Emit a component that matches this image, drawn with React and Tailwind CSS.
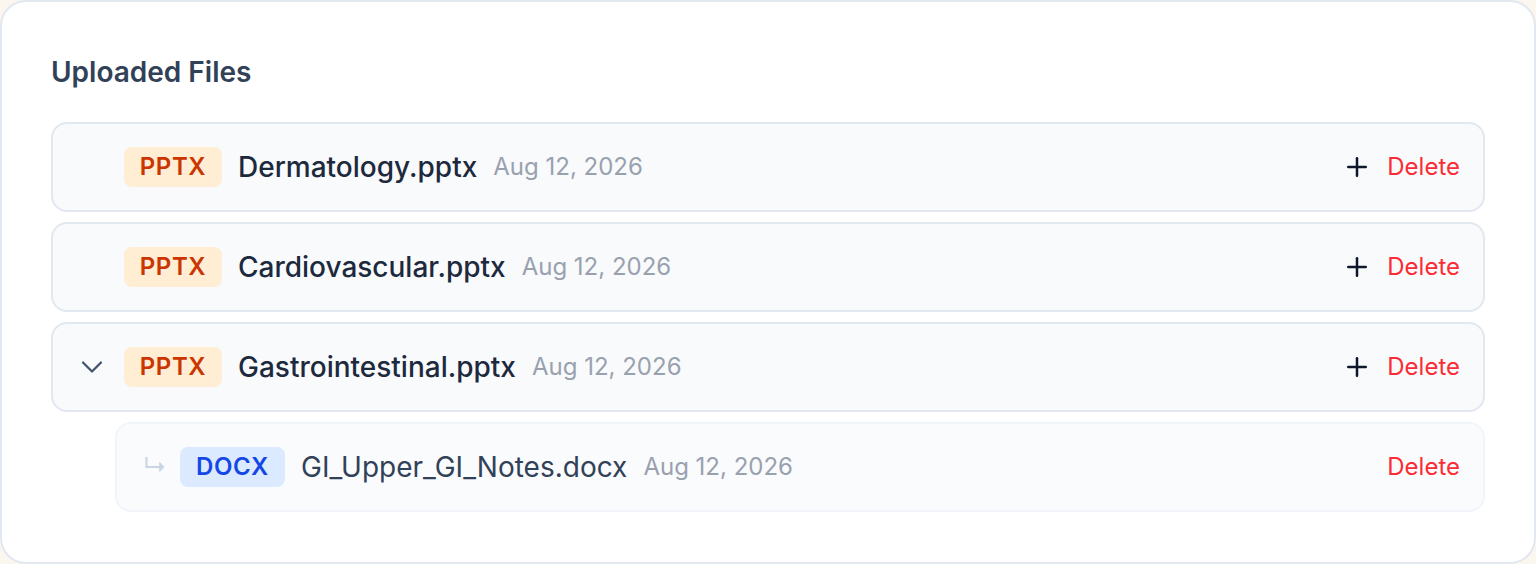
import React from 'react';
import { Plus } from 'lucide-react';

const files = [
  { id: 1, type: 'PPTX', name: 'Dermatology.pptx', date: 'Aug 12, 2026' },
  { id: 2, type: 'PPTX', name: 'Cardiovascular.pptx', date: 'Aug 12, 2026' },
  {
    id: 3,
    type: 'PPTX',
    name: 'Gastrointestinal.pptx',
    date: 'Aug 12, 2026',
    expanded: true,
    children: [{ id: 4, type: 'DOCX', name: 'GI_Upper_GI_Notes.docx', date: 'Aug 12, 2026' }],
  },
];

const badgeStyles = {
  PPTX: 'bg-orange-100 text-orange-700 w-[98px]',
  DOCX: 'bg-blue-100 text-blue-700 w-[105px]',
};

const TypeBadge = ({ type }) => (
  <span
    className={`h-10 flex items-center justify-center rounded-lg text-[24px] font-semibold tracking-wide ${badgeStyles[type]}`}
  >
    {type}
  </span>
);

const Chevron = () => (
  <svg width="22" height="14" viewBox="0 0 22 14" fill="none" stroke="currentColor" strokeWidth="2.3" strokeLinecap="round" strokeLinejoin="round">
    <polyline points="2,2.5 11,11.5 20,2.5" />
  </svg>
);

const App = () => {
  return (
    <div className="min-h-screen bg-[#fbf7ee]" style={{ fontFamily: 'Inter, "Noto Sans", sans-serif' }}>
      <div className="h-[564px] bg-white border-2 border-slate-200 rounded-[26px] px-[49px] pt-[50px]">
        <h2 className="text-[28px] leading-[40px] font-semibold text-slate-700">Uploaded Files</h2>

        <div className="mt-[30px] flex flex-col gap-[10px]">
          {files.map((file) => (
            <React.Fragment key={file.id}>
              {/* Parent row */}
              <div className="h-[90px] flex items-center bg-slate-50 border-2 border-slate-200 rounded-2xl pl-[28px] pr-[23px]">
                <div className="w-[22px] flex items-center justify-center text-slate-600">
                  {file.children && <Chevron />}
                </div>
                <div className="ml-[21px]">
                  <TypeBadge type={file.type} />
                </div>
                <span className="ml-4 text-[28px] font-medium text-slate-800">{file.name}</span>
                <span className="ml-4 text-2xl text-gray-400">{file.date}</span>
                <div className="ml-auto flex items-center gap-[15px]">
                  <Plus className="w-[30px] h-[30px] text-slate-900" strokeWidth={2} />
                  <button className="text-2xl text-red-500">Delete</button>
                </div>
              </div>

              {/* Child rows */}
              {file.expanded &&
                file.children.map((child) => (
                  <div
                    key={child.id}
                    className="ml-16 h-[90px] flex items-center bg-[#fafbfd] border-2 border-slate-100 rounded-2xl pl-[26px] pr-[23px]"
                  >
                    <span className="w-5 text-[24px] text-slate-300 leading-none">↳</span>
                    <div className="ml-[17px]">
                      <TypeBadge type={child.type} />
                    </div>
                    <span className="ml-4 text-[28px] text-slate-700">{child.name}</span>
                    <span className="ml-4 text-2xl text-gray-400">{child.date}</span>
                    <button className="ml-auto text-2xl text-red-500">Delete</button>
                  </div>
                ))}
            </React.Fragment>
          ))}
        </div>
      </div>
    </div>
  );
};

export default App;
